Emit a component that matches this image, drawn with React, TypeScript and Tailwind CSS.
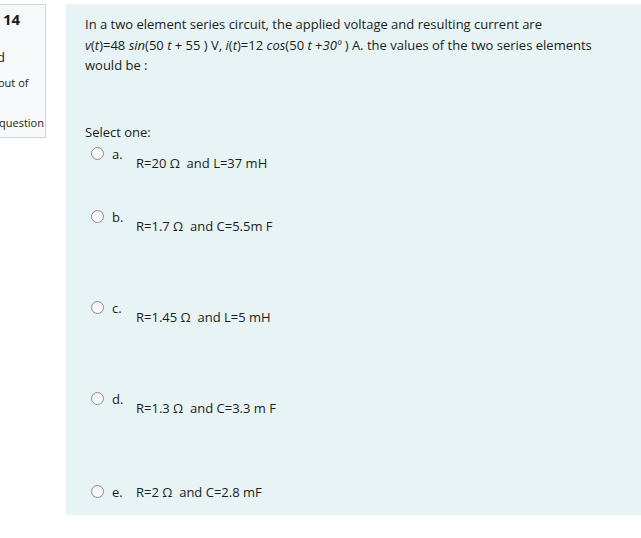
const options = [
  { letter: "a.", text: "R=20 Ω  and L=37 mH", rowH: "h-[63px]", inline: false },
  { letter: "b.", text: "R=1.7 Ω  and C=5.5m F", rowH: "h-[91px]", inline: false },
  { letter: "c.", text: "R=1.45 Ω  and L=5 mH", rowH: "h-[91px]", inline: false },
  { letter: "d.", text: "R=1.3 Ω  and C=3.3 m F", rowH: "h-[93px]", inline: false },
  { letter: "e.", text: "R=2 Ω  and C=2.8 mF", rowH: "h-[22px]", inline: true },
];

function Radio() {
  return (
    <span className="mt-[3px] block h-[13px] w-[13px] shrink-0 rounded-full border border-[#8a8a8a] bg-gradient-to-b from-[#f4f4f4] to-white" />
  );
}

export default function App() {
  return (
    <div
      className="flex min-h-[538px] w-[641px] items-start overflow-hidden bg-white pt-[4px] text-[13px] text-[#1a1d20]"
      style={{ fontFamily: '"Open Sans", "Noto Sans", sans-serif' }}
    >
      {/* question info, clipped by the page edge */}
      <div className="h-[134px] w-[46px] shrink-0 overflow-hidden border-r border-b border-t border-[#cfd4da] bg-[#f8f9fa]">
        <div className="pl-[3px] pt-[4px] text-[15px] font-bold leading-[20px]">14</div>
        <div className="-ml-[3px] mt-[18px] whitespace-nowrap leading-[20px]">d</div>
        <div className="-ml-[2px] mt-[6px] whitespace-nowrap text-[11px] leading-[20px]">out of</div>
        <div className="-ml-[1px] mt-[20px] whitespace-nowrap text-[11px] leading-[20px]">question</div>
      </div>

      <div className="ml-[20px] h-[511px] flex-1 bg-[#e7f3f5] pl-[19px] pr-[8px] pt-[10px]">
        <p className="leading-[20.5px]">
          In a two element series circuit, the applied voltage and resulting current are
          <br />
          <i>v</i>(<i>t</i>)=48 <i>sin</i>(50 <i>t</i> + 55 ) V, <i>i</i>(<i>t</i>)=12{" "}
          <i>cos</i>(50 <i>t</i> +<i>30º</i> ) A. the values of the two series elements
          <br />
          would be :
        </p>

        <div className="mt-[46px] leading-[20px]">Select one:</div>

        <div className="mt-[2px] flex flex-col">
          {options.map((o) => (
            <div key={o.letter} className={`flex items-start ${o.rowH}`}>
              <div className="ml-[6px] flex items-start">
                <Radio />
                <span className="ml-[8px] w-[24px] leading-[20px]">{o.letter}</span>
              </div>
              <div className={`whitespace-pre leading-[20px] ${o.inline ? "" : "mt-[9px]"}`}>
                {o.text}
              </div>
            </div>
          ))}
        </div>
      </div>
    </div>
  );
}
